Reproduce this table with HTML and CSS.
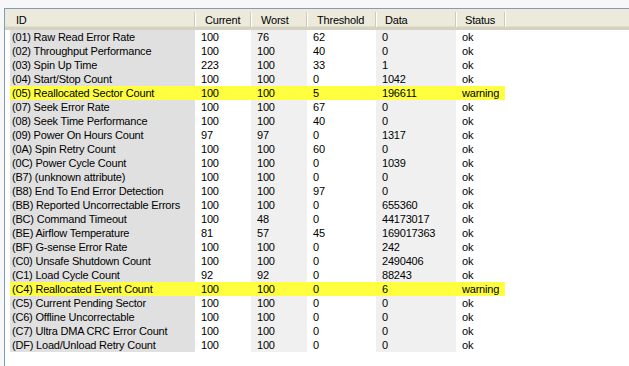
FILE: index.html
```html
<!DOCTYPE html>
<html>
<head>
<meta charset="utf-8">
<link rel="stylesheet" href="styles.css">
</head>
<body>
<div class="frame">
  <div class="list">
    <div class="header">
      <div class="hcell c-id">ID</div>
      <div class="hcell c-cur">Current</div>
      <div class="hcell c-worst">Worst</div>
      <div class="hcell c-thr">Threshold</div>
      <div class="hcell c-data">Data</div>
      <div class="hcell c-status">Status</div>
      <div class="hfill"></div>
    </div>
    <div class="rows">
      <div class="row"><div class="cell id">(01) Raw Read Error Rate</div><div class="cell cur">100</div><div class="cell worst">76</div><div class="cell thr">62</div><div class="cell data">0</div><div class="cell status">ok</div></div>
      <div class="row"><div class="cell id">(02) Throughput Performance</div><div class="cell cur">100</div><div class="cell worst">100</div><div class="cell thr">40</div><div class="cell data">0</div><div class="cell status">ok</div></div>
      <div class="row"><div class="cell id">(03) Spin Up Time</div><div class="cell cur">223</div><div class="cell worst">100</div><div class="cell thr">33</div><div class="cell data">1</div><div class="cell status">ok</div></div>
      <div class="row"><div class="cell id">(04) Start/Stop Count</div><div class="cell cur">100</div><div class="cell worst">100</div><div class="cell thr">0</div><div class="cell data">1042</div><div class="cell status">ok</div></div>
      <div class="row warn"><div class="cell id">(05) Reallocated Sector Count</div><div class="cell cur">100</div><div class="cell worst">100</div><div class="cell thr">5</div><div class="cell data">196611</div><div class="cell status">warning</div></div>
      <div class="row"><div class="cell id">(07) Seek Error Rate</div><div class="cell cur">100</div><div class="cell worst">100</div><div class="cell thr">67</div><div class="cell data">0</div><div class="cell status">ok</div></div>
      <div class="row"><div class="cell id">(08) Seek Time Performance</div><div class="cell cur">100</div><div class="cell worst">100</div><div class="cell thr">40</div><div class="cell data">0</div><div class="cell status">ok</div></div>
      <div class="row"><div class="cell id">(09) Power On Hours Count</div><div class="cell cur">97</div><div class="cell worst">97</div><div class="cell thr">0</div><div class="cell data">1317</div><div class="cell status">ok</div></div>
      <div class="row"><div class="cell id">(0A) Spin Retry Count</div><div class="cell cur">100</div><div class="cell worst">100</div><div class="cell thr">60</div><div class="cell data">0</div><div class="cell status">ok</div></div>
      <div class="row"><div class="cell id">(0C) Power Cycle Count</div><div class="cell cur">100</div><div class="cell worst">100</div><div class="cell thr">0</div><div class="cell data">1039</div><div class="cell status">ok</div></div>
      <div class="row"><div class="cell id">(B7) (unknown attribute)</div><div class="cell cur">100</div><div class="cell worst">100</div><div class="cell thr">0</div><div class="cell data">0</div><div class="cell status">ok</div></div>
      <div class="row"><div class="cell id">(B8) End To End Error Detection</div><div class="cell cur">100</div><div class="cell worst">100</div><div class="cell thr">97</div><div class="cell data">0</div><div class="cell status">ok</div></div>
      <div class="row"><div class="cell id">(BB) Reported Uncorrectable Errors</div><div class="cell cur">100</div><div class="cell worst">100</div><div class="cell thr">0</div><div class="cell data">655360</div><div class="cell status">ok</div></div>
      <div class="row"><div class="cell id">(BC) Command Timeout</div><div class="cell cur">100</div><div class="cell worst">48</div><div class="cell thr">0</div><div class="cell data">44173017</div><div class="cell status">ok</div></div>
      <div class="row"><div class="cell id">(BE) Airflow Temperature</div><div class="cell cur">81</div><div class="cell worst">57</div><div class="cell thr">45</div><div class="cell data">169017363</div><div class="cell status">ok</div></div>
      <div class="row"><div class="cell id">(BF) G-sense Error Rate</div><div class="cell cur">100</div><div class="cell worst">100</div><div class="cell thr">0</div><div class="cell data">242</div><div class="cell status">ok</div></div>
      <div class="row"><div class="cell id">(C0) Unsafe Shutdown Count</div><div class="cell cur">100</div><div class="cell worst">100</div><div class="cell thr">0</div><div class="cell data">2490406</div><div class="cell status">ok</div></div>
      <div class="row"><div class="cell id">(C1) Load Cycle Count</div><div class="cell cur">92</div><div class="cell worst">92</div><div class="cell thr">0</div><div class="cell data">88243</div><div class="cell status">ok</div></div>
      <div class="row warn"><div class="cell id">(C4) Reallocated Event Count</div><div class="cell cur">100</div><div class="cell worst">100</div><div class="cell thr">0</div><div class="cell data">6</div><div class="cell status">warning</div></div>
      <div class="row"><div class="cell id">(C5) Current Pending Sector</div><div class="cell cur">100</div><div class="cell worst">100</div><div class="cell thr">0</div><div class="cell data">0</div><div class="cell status">ok</div></div>
      <div class="row"><div class="cell id">(C6) Offline Uncorrectable</div><div class="cell cur">100</div><div class="cell worst">100</div><div class="cell thr">0</div><div class="cell data">0</div><div class="cell status">ok</div></div>
      <div class="row"><div class="cell id">(C7) Ultra DMA CRC Error Count</div><div class="cell cur">100</div><div class="cell worst">100</div><div class="cell thr">0</div><div class="cell data">0</div><div class="cell status">ok</div></div>
      <div class="row"><div class="cell id">(DF) Load/Unload Retry Count</div><div class="cell cur">100</div><div class="cell worst">100</div><div class="cell thr">0</div><div class="cell data">0</div><div class="cell status">ok</div></div>
    </div>
  </div>
</div>
</body>
</html>
```

FILE: styles.css
```css
html, body {
  margin: 0;
  padding: 0;
  background: #f7f7fa;
  width: 629px;
  height: 366px;
  overflow: hidden;
}

.frame {
  padding: 8px 0 0 4px;
  height: 358px;
  font-family: "Liberation Sans", Arial, sans-serif;
  font-size: 11px;
  letter-spacing: -0.2px;
  color: #000;
}

.list {
  background: #fff;
  border-top: 1px solid #7f9db9;
  border-left: 1px solid #7f9db9;
  height: 357px;
}

.header {
  display: flex;
  height: 18px;
  background: #ebeadb;
  border-bottom: 3px solid #d6d2c2;
  box-shadow: inset 0 -1px 0 #e2decd;
}

.hcell {
  position: relative;
  box-sizing: border-box;
  line-height: 20px;
  padding-top: 1px;
  padding-left: 10px;
  white-space: nowrap;
}

.hcell::after {
  content: "";
  position: absolute;
  right: 0;
  top: 3px;
  bottom: 0;
  width: 1px;
  background: #cdcab9;
  box-shadow: 1px 0 0 #fff;
}

.c-id { width: 190px; padding-left: 11px; }
.c-cur { width: 56px; }
.c-worst { width: 56px; }
.c-thr { width: 69px; }
.c-data { width: 80px; padding-left: 9px; }
.c-status { width: 49px; padding-left: 9px; }
.hfill { flex: 1; }

.rows {
  padding-left: 5px;
}

.row {
  display: grid;
  grid-template-columns: 185px 56px 56px 69px 80px 49px;
  height: 14px;
  line-height: 14px;
}

.cell {
  padding-left: 6px;
  white-space: nowrap;
  overflow: hidden;
}

.cell.id { background: #e0e0e0; padding-left: 2px; }
.cell.worst, .cell.data { background: #f0f0f0; }
.cell.cur, .cell.thr, .cell.status { background: #fff; }

.row.warn .cell { background: #ffff40; }
```
